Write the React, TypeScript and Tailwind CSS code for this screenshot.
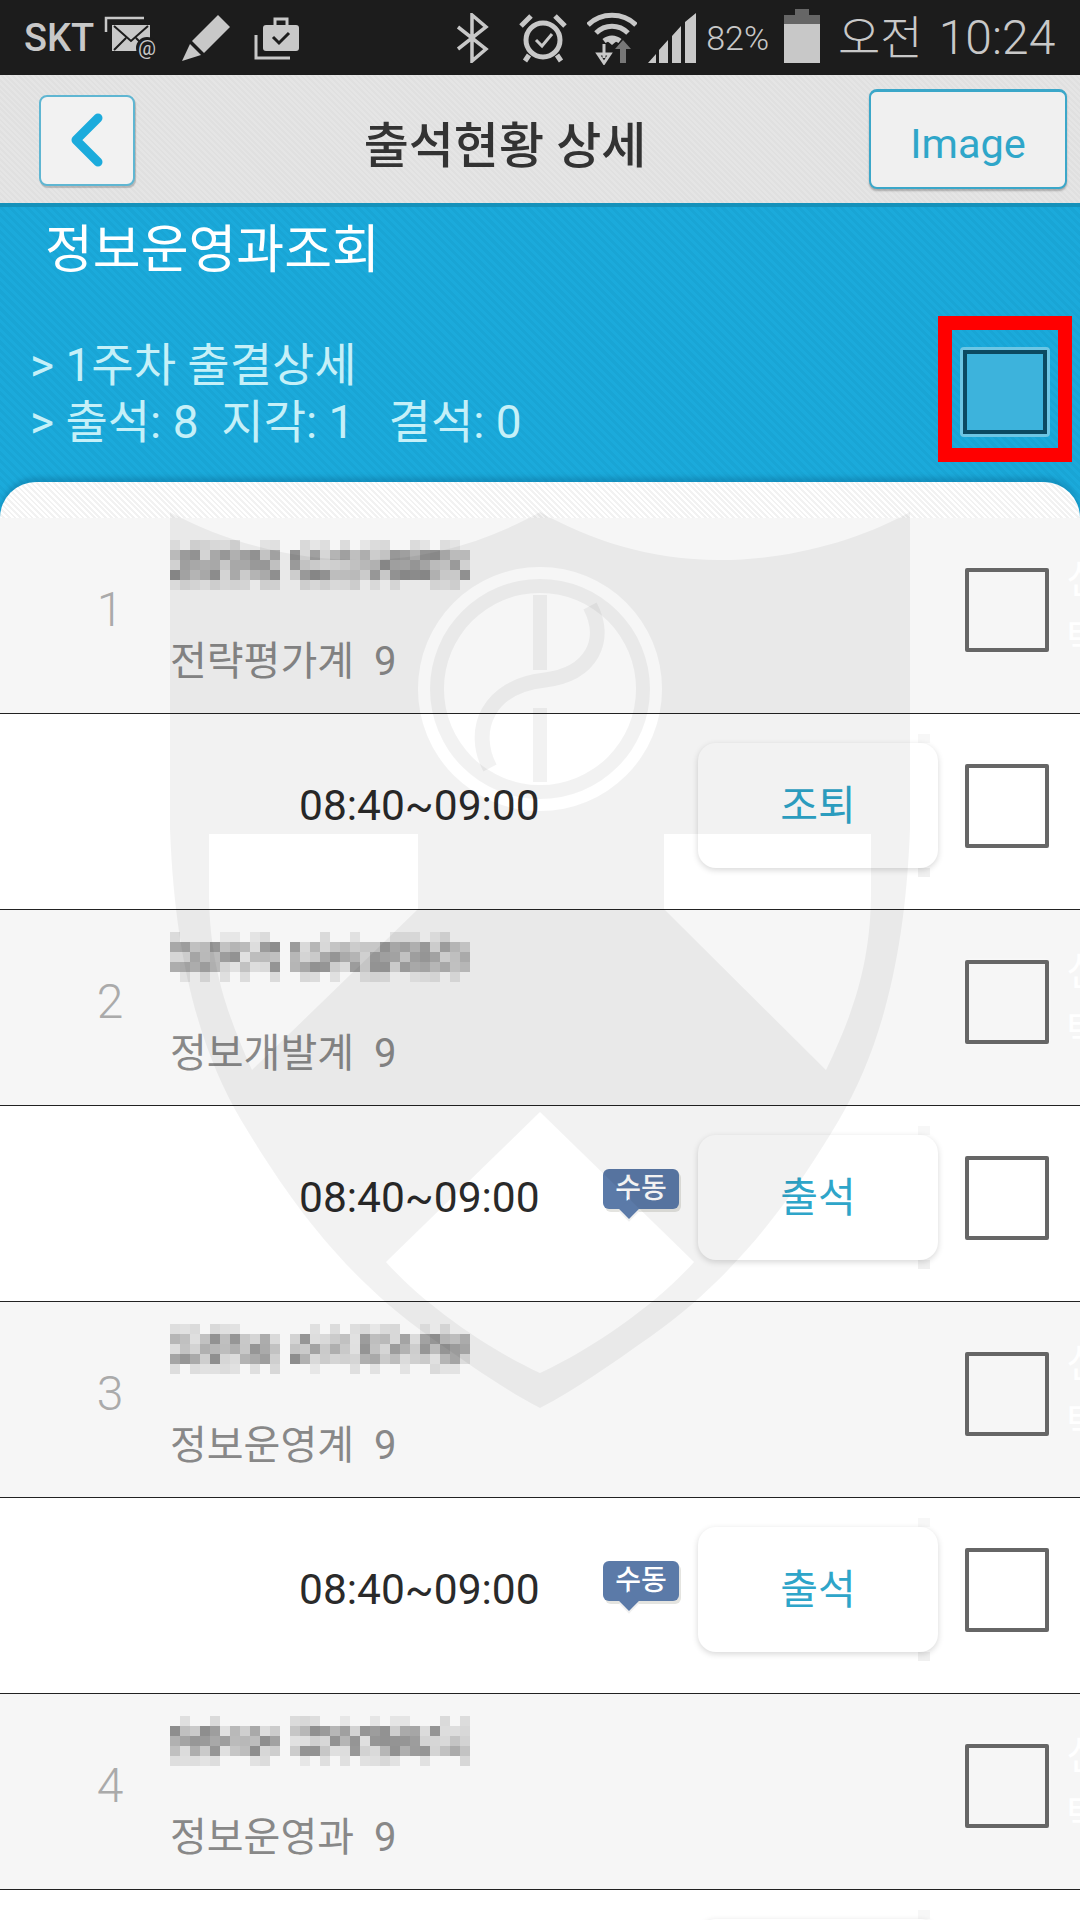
import React from "react";

interface Student {
  no: number;
  dept: string;
  status: string;
  manual: boolean;
  seed: number;
}

const students: Student[] = [
  { no: 1, dept: "전략평가계", status: "조퇴", manual: false, seed: 7 },
  { no: 2, dept: "정보개발계", status: "출석", manual: true, seed: 23 },
  { no: 3, dept: "정보운영계", status: "출석", manual: true, seed: 51 },
  { no: 4, dept: "정보운영과", status: "출석", manual: true, seed: 88 },
];

// blurred-out name, drawn as a mosaic
const Mosaic = ({ seed }: { seed: number }) => {
  const cells: React.ReactNode[] = [];
  let s = seed;
  for (let row = 0; row < 5; row++) {
    for (let col = 0; col < 30; col++) {
      s = (s * 9301 + 49297) % 233280;
      if (col === 11) continue;
      const edge = row === 0 || row === 4;
      const v = s / 233280;
      const grey = edge ? 215 + Math.round(v * 30) : 140 + Math.round(v * 85);
      if (edge && v > 0.55) continue;
      cells.push(
        <rect
          key={`${row}-${col}`}
          x={col * 10}
          y={row * 10}
          width={10}
          height={10}
          fill={`rgb(${grey},${grey},${grey})`}
        />
      );
    }
  }
  return (
    <svg width={300} height={50} className="block">
      {cells}
    </svg>
  );
};

const Checkbox = () => (
  <div className="h-[84px] w-[84px] shrink-0 rounded-[2px] border-[4px] border-[#666666] shadow-[0_0_3px_rgba(255,255,255,0.8)]" />
);

const StatusButton = ({ label }: { label: string }) => (
  <div className="relative flex h-[125px] w-[240px] items-center justify-center rounded-[18px] pt-[2px] text-[41px] text-[#2ea5c9] shadow-[0_2px_6px_rgba(0,0,0,0.16)]">
    <span className="absolute right-[8px] top-[-9px] h-[9px] w-[12px] bg-black/[0.03]" />
    <span className="absolute bottom-[-9px] right-[8px] h-[9px] w-[12px] bg-black/[0.06]" />
    {label}
  </div>
);

const ManualBadge = () => (
  <div className="relative mb-[18px] mr-[19px] flex h-[40px] w-[76px] items-center justify-center rounded-[6px] bg-[#5b7aa8] text-[28px] font-medium leading-none text-white shadow-[2px_3px_0_#e4e4e0]">
    수동
    <span className="absolute bottom-[-7px] left-[19px] h-[14px] w-[14px] rotate-45 bg-[#5b7aa8] shadow-[2px_2px_0_#f0f0f0]" />
  </div>
);

const StudentRows = ({ student }: { student: Student }) => (
  <>
    <div className="flex h-[196px] items-center border-b border-[#222222] bg-[#f6f6f6] pb-[12px]">
      <div className="w-[170px] pl-[50px] text-center text-[48px] font-light text-[#aaaaaa]">{student.no}</div>
      <div className="flex-1 self-stretch pt-[22px]">
        <Mosaic seed={student.seed} />
        <div className="mt-[52px] flex text-[40px] leading-[40px] text-[#888888]">
          <span>{student.dept}</span>
          <span className="ml-[20px]">9</span>
        </div>
      </div>
      <Checkbox />
      <div className="ml-[17px] w-[14px] overflow-hidden text-[40px] leading-[60px] text-white">
        <div className="w-[44px]">신</div>
        <div className="w-[44px]">탁</div>
      </div>
    </div>
    <div className="flex h-[196px] items-center border-b border-[#222222] bg-white pb-[12px] pl-[299px] pr-[31px]">
      <span className="text-[42.5px] text-[#2a2a2a]">08:40~09:00</span>
      <div className="flex-1" />
      {student.manual && <ManualBadge />}
      <StatusButton label={student.status} />
      <div className="w-[27px]" />
      <Checkbox />
    </div>
  </>
);

const MailIcon = () => (
  <svg width={56} height={44} viewBox="0 0 56 44" className="ml-[10px]">
    <path d="M2 16V2h38" fill="none" stroke="#c8c8c8" strokeWidth={2.5} />
    <rect x={8} y={9} width={38} height={26} fill="#c8c8c8" />
    <path d="M10 10l17 15 17-15M10 34l12-12M44 34L32 22" fill="none" stroke="#1c1c1c" strokeWidth={2} />
    <circle cx={43} cy={32} r={11} fill="#1c1c1c" />
    <text x={43} y={39} textAnchor="middle" fontSize={20} fill="#c8c8c8">@</text>
  </svg>
);

const PencilIcon = () => (
  <svg width={48} height={46} viewBox="0 0 48 46" className="ml-[22px]">
    <path d="M36 0l12 12-26 26-12-12z" fill="#c8c8c8" />
    <path d="M8 29l11 11-19 6z" fill="#c8c8c8" />
  </svg>
);

const CaseIcon = () => (
  <svg width={46} height={46} viewBox="0 0 46 46" className="ml-[24px]">
    <path d="M2 20v23h34" fill="none" stroke="#c8c8c8" strokeWidth={3} />
    <rect x={9} y={10} width={36} height={26} rx={3} fill="#c8c8c8" />
    <path d="M21 10V4h12v6" fill="none" stroke="#c8c8c8" strokeWidth={3} />
    <path d="M19 22l6 6 10-10" fill="none" stroke="#1c1c1c" strokeWidth={3} />
  </svg>
);

const BluetoothIcon = () => (
  <svg width={34} height={50} viewBox="0 0 34 50">
    <path d="M3 14l28 22-14 12V2l14 12L3 36" fill="none" stroke="#c8c8c8" strokeWidth={3.5} />
  </svg>
);

const AlarmIcon = () => (
  <svg width={50} height={50} viewBox="0 0 50 50" className="ml-[29px]">
    <circle cx={25} cy={27} r={17} fill="none" stroke="#c8c8c8" strokeWidth={5} />
    <path d="M3 13L13 3M47 13L37 3M11 42l-4 6M39 42l4 6" fill="none" stroke="#c8c8c8" strokeWidth={5} />
    <path d="M18 27l6 6 10-12" fill="none" stroke="#c8c8c8" strokeWidth={3} />
  </svg>
);

const WifiIcon = () => (
  <svg width={50} height={54} viewBox="0 0 50 54" className="ml-[19px]">
    <path d="M1 14C14 1 36 1 49 14M9 22c9-9 23-9 32 0M17 30c5-4 11-4 16 0" fill="none" stroke="#c8c8c8" strokeWidth={5} />
    <path d="M25 34l-6-5c4-2 8-2 12 0z" fill="#c8c8c8" />
    <path d="M17 33v14M11 43l6 9 6-9z" fill="none" stroke="#c8c8c8" strokeWidth={3} />
    <path d="M33 52V38h-5l8-9 8 9h-5v14z" fill="#777777" />
  </svg>
);

const SignalIcon = () => (
  <svg width={48} height={50} viewBox="0 0 48 50" className="ml-[11px]">
    <path d="M0 50l8-9v9zM11 37l9-10v23h-9zM24 23l9-10v37h-9zM37 9l11-9v50H37z" fill="#c8c8c8" />
  </svg>
);

const BatteryIcon = () => (
  <div className="ml-[15px] flex w-[36px] flex-col items-center self-start pt-[9px]">
    <div className="h-[6px] w-[14px] bg-[#666666]" />
    <div className="h-[9px] w-full bg-[#666666]" />
    <div className="h-[39px] w-full bg-[#c8c8c8]" />
  </div>
);

const Watermark = () => (
  <svg width={1080} height={1920} className="pointer-events-none absolute left-0 top-0">
    <path
      fillRule="evenodd"
      fill="rgba(0,0,0,0.05)"
      d="M170 512C230 545 300 560 360 560C430 560 490 540 540 512C590 540 650 560 720 560C780 560 850 545 910 512L910 830C905 960 880 1050 839 1120C800 1185 745 1270 650 1337C610 1365 575 1390 540 1408C505 1390 470 1365 430 1337C335 1270 280 1185 241 1120C200 1050 175 960 170 830Z
      M209 834L418 834L418 909L252 1070C225 1010 209 960 209 890Z
      M664 834L871 834L871 890C871 960 855 1010 826 1070L664 909Z
      M540 1112L694 1262C660 1300 600 1345 540 1373C480 1345 420 1300 386 1262Z
      M418 689a122 122 0 1 0 244 0a122 122 0 1 0 -244 0Z
      M430 689a110 110 0 1 0 220 0a110 110 0 1 0 -220 0Z
      M444 689a96 96 0 1 0 192 0a96 96 0 1 0 -192 0Z"
    />
    <path d="M540 595V670M540 708V782" stroke="rgba(0,0,0,0.05)" strokeWidth={14} fill="none" />
    <path d="M590 606C608 640 592 674 545 680C488 686 470 730 490 768" stroke="rgba(0,0,0,0.05)" strokeWidth={15} fill="none" />
  </svg>
);

export default function App() {
  return (
    <div className="relative h-[1920px] w-[1080px] overflow-hidden bg-white font-[Roboto,'Noto_Sans_CJK_KR',sans-serif]">
      {/* status bar */}
      <div className="flex h-[75px] items-center bg-[#1c1c1c] pl-[24px] text-[#c8c8c8]">
        <span className="text-[38px] font-medium leading-none">SKT</span>
        <MailIcon />
        <PencilIcon />
        <CaseIcon />
        <div className="w-[155px]" />
        <BluetoothIcon />
        <AlarmIcon />
        <WifiIcon />
        <SignalIcon />
        <span className="ml-[10px] text-[34px] font-light leading-none">82%</span>
        <BatteryIcon />
        <span className="ml-[18px] text-[46px] font-light leading-none">오전</span>
        <span className="ml-[16px] text-[48px] font-light leading-none">10:24</span>
      </div>

      {/* title bar */}
      <div className="flex h-[128px] items-center bg-[repeating-linear-gradient(45deg,#e5e5e5_0px,#e5e5e5_2px,#e0e0e0_2px,#e0e0e0_4px)] pl-[39px] pr-[13px]">
        <div className="mt-[2px] flex h-[91px] w-[96px] items-center justify-center rounded-[8px] border-2 border-[#5fb6d2] bg-[#f2f2f2] shadow-[1px_2px_1px_rgba(0,0,0,0.2)]">
          <svg width={34} height={56} viewBox="0 0 34 56">
            <path d="M28 6L6 28l22 22" fill="none" stroke="#1cabdc" strokeWidth={9} strokeLinecap="round" strokeLinejoin="round" />
          </svg>
        </div>
        <div className="flex-1 pl-[6px] pt-[14px] text-center text-[49px] font-medium leading-none text-[#333333]">출석현황 상세</div>
        <div className="flex h-[100px] w-[198px] items-center justify-center rounded-[8px] border-2 border-t-[3px] border-[#3ba7c9] bg-[#f0f0f0] pt-[9px] text-[41.5px] text-[#2fa6c9] shadow-[0_2px_2px_rgba(0,0,0,0.25)]">
          Image
        </div>
      </div>

      {/* blue summary */}
      <div className="bg-[repeating-linear-gradient(45deg,#1baadb_0px,#1baadb_3px,#19a5d5_3px,#19a5d5_6px)] border-t-[4px] border-[#1591ba]">
        <div className="pl-[45px] pt-[16px] text-[52px] leading-[56px] text-white">정보운영과조회</div>
        <div className="mt-[37px] flex items-center justify-between pl-[30px] pr-[8px]">
          <div className="pt-[9px] text-[46px] leading-[57px] text-[#c5f0f8]">
            <div>&gt; 1주차 출결상세</div>
            <div className="whitespace-pre">&gt; 출석: 8  지각: 1   결석: 0</div>
          </div>
          <div className="flex h-[146px] w-[134px] items-center justify-center border-[14px] border-[#ff0000] pt-[5px]">
            <div className="h-[90px] w-[90px] rounded-[4px] border-[3px] border-[#6cc6e4]">
              <div className="h-full w-full border-[4px] border-[#0b4a62] bg-[#3db3dc]" />
            </div>
          </div>
        </div>
        <div className="mt-[20px] h-[36px] rounded-t-[38px] bg-[repeating-linear-gradient(45deg,#ffffff_0px,#ffffff_2px,#f2f2f2_2px,#f2f2f2_4px)] shadow-[0_-5px_4px_rgba(0,80,120,0.25)]" />
      </div>

      {/* attendance list */}
      <div>
        {students.map((student) => (
          <StudentRows key={student.no} student={student} />
        ))}
      </div>

      <Watermark />
    </div>
  );
}
